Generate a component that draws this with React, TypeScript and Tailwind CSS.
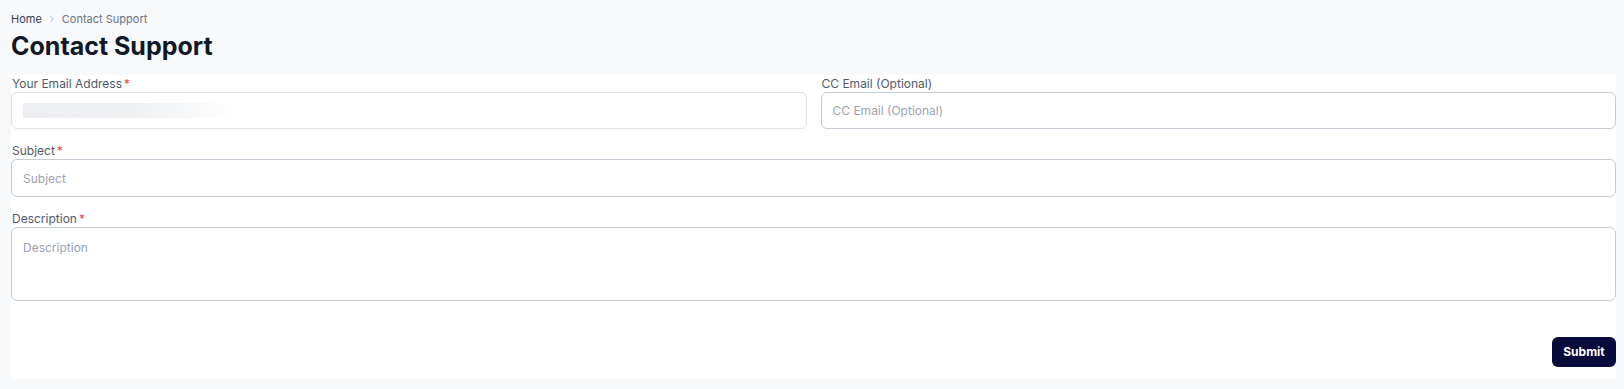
import React from "react";

export default function App() {
  const font = { fontFamily: "Inter, 'Noto Sans', sans-serif" };
  return (
    <div style={font} className="min-h-screen bg-[#f8f9fb] pl-[11px] pr-[8px] pt-[12px] pb-[10px]">
      <nav className="flex h-[14px] items-center gap-[5px] text-[11px] leading-[14px]">
        <span className="text-[#374151]">Home</span>
        <svg width="10" height="10" viewBox="0 0 24 24" fill="none" stroke="#9ca3af" strokeWidth="2" strokeLinecap="round" strokeLinejoin="round">
          <path d="m9 18 6-6-6-6" />
        </svg>
        <span className="text-[#6b7280]">Contact Support</span>
      </nav>
      <h1 className="mt-[5px] text-[25px] font-bold leading-[30px] text-[#111827]">Contact Support</h1>
      <div className="mt-[14px] bg-white pb-[12px]">
        <div className="grid grid-cols-2 gap-x-[14px]">
          <div>
            <label className="flex h-[17px] items-center pl-[1px] text-[12px] text-[#505a68]">
              Your Email Address<span className="ml-[2px] text-[#ef4444]">*</span>
            </label>
            <div className="flex h-[37px] items-center rounded-[6px] border border-[#dde1e6] bg-white px-[11px]">
              <div className="h-[15px] w-[218px] bg-gradient-to-r from-[#eceef1] via-[#eef0f2] to-white" />
            </div>
          </div>
          <div>
            <label className="flex h-[17px] items-center pl-[1px] text-[12px] text-[#505a68]">CC Email (Optional)</label>
            <input
              placeholder="CC Email (Optional)"
              className="h-[37px] w-full rounded-[6px] border border-[#c4ccd5] bg-white px-[11px] text-[12px] outline-none placeholder:text-[#9ca3af]"
            />
          </div>
        </div>
        <label className="mt-[14px] flex h-[16px] items-center pl-[1px] text-[12px] text-[#505a68]">
          Subject<span className="ml-[2px] text-[#ef4444]">*</span>
        </label>
        <input
          placeholder="Subject"
          className="h-[38px] w-full rounded-[6px] border border-[#c4ccd5] bg-white px-[11px] text-[12px] outline-none placeholder:text-[#9ca3af]"
        />
        <label className="mt-[13px] flex h-[17px] items-center pl-[1px] text-[12px] text-[#505a68]">
          Description<span className="ml-[2px] text-[#ef4444]">*</span>
        </label>
        <textarea
          placeholder="Description"
          className="block h-[74px] w-full resize-none rounded-[6px] border border-[#c4ccd5] bg-white px-[11px] pt-[12px] text-[12px] leading-[16px] outline-none placeholder:text-[#9ca3af]"
        />
        <div className="mt-[36px] flex justify-end">
          <button className="h-[30px] w-[64px] rounded-[6px] bg-[#070a3a] text-[12px] font-bold text-white">Submit</button>
        </div>
      </div>
    </div>
  );
}
